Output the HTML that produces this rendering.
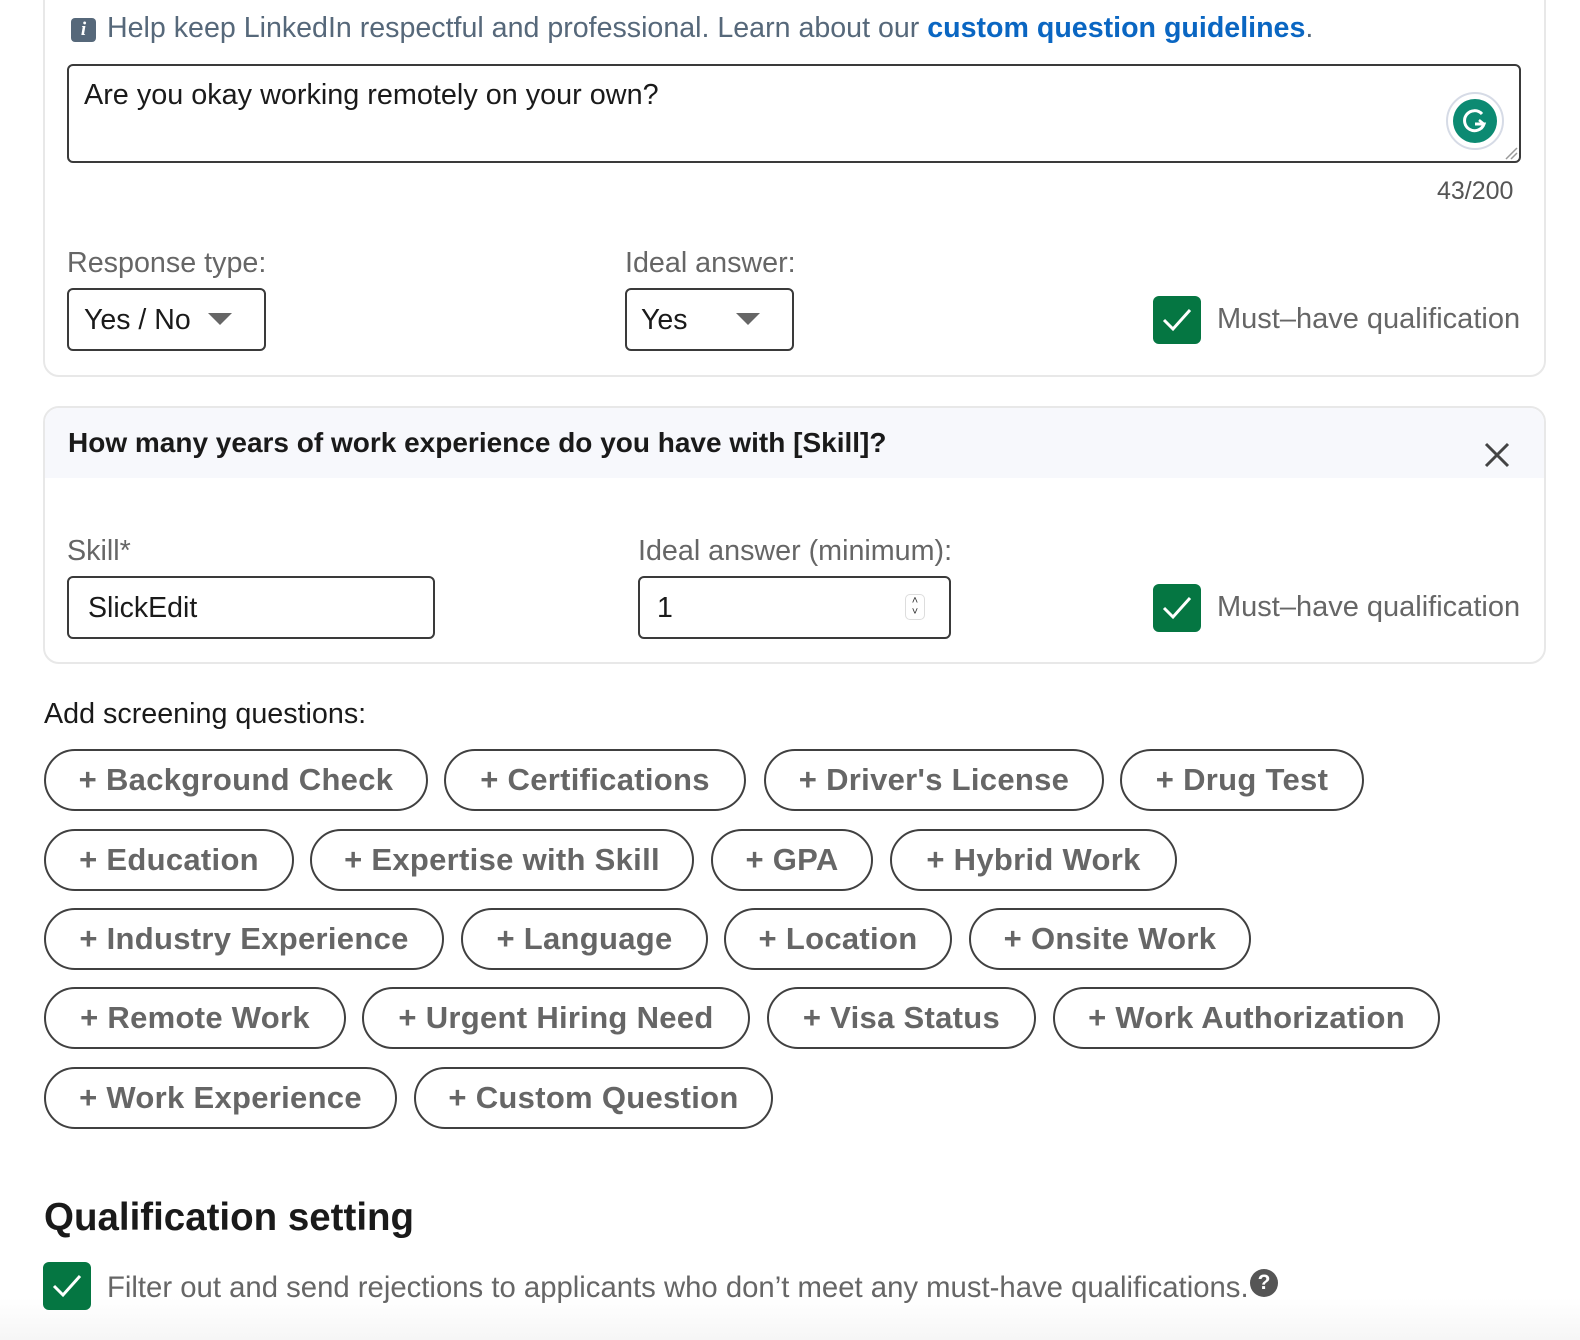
<!DOCTYPE html>
<html><head><meta charset="utf-8">
<style>
*{box-sizing:border-box;margin:0;padding:0}
html,body{width:1580px;height:1340px;overflow:hidden;background:#fff;font-family:"Liberation Sans",sans-serif}
.a{position:absolute;white-space:nowrap}
.card{position:absolute;border:2px solid #e8e8e8;border-radius:16px;background:#fff}
.box{position:absolute;border:2px solid #3a3a3a;border-radius:6px;background:#fff}
.lbl{position:absolute;font-size:28.7px;color:#666;white-space:nowrap}
.cb{position:absolute;width:48px;height:48px;background:#057642;border-radius:6px}
.cb svg{position:absolute;left:8px;top:9px}
.pill{position:absolute;height:62px;border:2px solid #404040;border-radius:31px;display:flex;align-items:center;justify-content:center;font-size:31px;font-weight:bold;color:#666;white-space:nowrap;letter-spacing:0.3px}
.tri{position:absolute;width:0;height:0;border-left:12px solid transparent;border-right:12px solid transparent;border-top:12px solid #666}
</style></head><body>
<div style="position:absolute;left:0;top:1200px;width:1580px;height:140px;background:linear-gradient(#fff 70%,#f6f6f6)"></div>

<div class="card" style="left:43px;top:-20px;width:1503px;height:397px"></div>
<div class="a" style="left:71px;top:18px;width:25px;height:24px;background:#56687a;border-radius:4px;color:#fff;font-weight:bold;font-style:italic;font-size:19px;text-align:center;line-height:24px;font-family:'Liberation Serif',serif">i</div>
<div class="a" style="left:107px;top:12px;font-size:28.6px;color:#56687a">Help keep LinkedIn respectful and professional. Learn about our <b style="color:#0a66c2">custom question guidelines</b>.</div>
<div class="box" style="left:67px;top:64px;width:1454px;height:99px"></div>
<div class="a" style="left:84px;top:79px;font-size:28.8px;color:#1a1a1a">Are you okay working remotely on your own?</div>
<div class="a" style="left:1446px;top:92px;width:58px;height:58px;border-radius:50%;border:2px solid #d6dbe6;background:#fff"></div>
<div class="a" style="left:1453px;top:99px;width:44px;height:44px;border-radius:50%;background:#0c8a72"></div>
<svg class="a" style="left:1453px;top:99px" width="44" height="44" viewBox="0 0 44 44"><path d="M29 15 A10 10 0 1 0 31 25 L22 25" fill="none" stroke="#fff" stroke-width="3"/><path d="M26 21 L31 25 L28 30" fill="none" stroke="#fff" stroke-width="2.5"/></svg>
<svg class="a" style="left:1504px;top:146px" width="14" height="14"><path d="M2 13 L13 2 M7 13 L13 7" stroke="#999" stroke-width="1.5"/></svg>
<div class="a" style="left:1437px;top:177px;font-size:25px;color:#555">43/200</div>
<div class="lbl" style="left:67px;top:247px">Response type:</div>
<div class="box" style="left:67px;top:288px;width:199px;height:63px"></div>
<div class="a" style="left:84px;top:304px;font-size:28.5px;color:#1a1a1a">Yes / No</div>
<div class="tri" style="left:208px;top:313px"></div>
<div class="lbl" style="left:625px;top:247px">Ideal answer:</div>
<div class="box" style="left:625px;top:288px;width:169px;height:63px"></div>
<div class="a" style="left:641px;top:304px;font-size:28.5px;color:#1a1a1a">Yes</div>
<div class="tri" style="left:736px;top:313px"></div>
<div class="cb" style="left:1153px;top:296px"><svg width="32" height="30"><path d="M3 15 L12 24 L29 5" fill="none" stroke="#fff" stroke-width="3"/></svg></div>
<div class="lbl" style="left:1217px;top:303px;font-size:29px">Must–have qualification</div>

<div class="card" style="left:43px;top:406px;width:1503px;height:258px;overflow:hidden"><div style="height:70px;background:#f7f8fc"></div></div>
<div class="a" style="left:68px;top:427px;font-size:28px;font-weight:bold;color:#1a1a1a">How many years of work experience do you have with [Skill]?</div>
<svg class="a" style="left:1484px;top:442px" width="26" height="26"><path d="M2 2 L24 24 M24 2 L2 24" stroke="#444" stroke-width="3"/></svg>
<div class="lbl" style="left:67px;top:535px">Skill*</div>
<div class="box" style="left:67px;top:576px;width:368px;height:63px"></div>
<div class="a" style="left:88px;top:592px;font-size:28.5px;color:#1a1a1a">SlickEdit</div>
<div class="lbl" style="left:638px;top:535px">Ideal answer (minimum):</div>
<div class="box" style="left:638px;top:576px;width:313px;height:63px"></div>
<div class="a" style="left:657px;top:592px;font-size:28.5px;color:#1a1a1a">1</div>
<div class="a" style="left:905px;top:594px;width:20px;height:26px;border:1px solid #ddd;border-radius:5px;font-size:11px;line-height:11px;text-align:center;color:#333;padding-top:1px">˄<br>˅</div>
<div class="cb" style="left:1153px;top:584px"><svg width="32" height="30"><path d="M3 15 L12 24 L29 5" fill="none" stroke="#fff" stroke-width="3"/></svg></div>
<div class="lbl" style="left:1217px;top:591px;font-size:29px">Must–have qualification</div>

<div class="a" style="left:44px;top:698px;font-size:28.7px;color:#1a1a1a">Add screening questions:</div>

<div class="pill" style="left:44px;top:749px;width:384px">+ Background Check</div>
<div class="pill" style="left:444px;top:749px;width:302px">+ Certifications</div>
<div class="pill" style="left:764px;top:749px;width:340px">+ Driver's License</div>
<div class="pill" style="left:1120px;top:749px;width:244px">+ Drug Test</div>

<div class="pill" style="left:44px;top:829px;width:250px">+ Education</div>
<div class="pill" style="left:310px;top:829px;width:384px">+ Expertise with Skill</div>
<div class="pill" style="left:711px;top:829px;width:162px">+ GPA</div>
<div class="pill" style="left:890px;top:829px;width:287px">+ Hybrid Work</div>

<div class="pill" style="left:44px;top:908px;width:400px">+ Industry Experience</div>
<div class="pill" style="left:461px;top:908px;width:247px">+ Language</div>
<div class="pill" style="left:724px;top:908px;width:228px">+ Location</div>
<div class="pill" style="left:969px;top:908px;width:282px">+ Onsite Work</div>

<div class="pill" style="left:44px;top:987px;width:302px">+ Remote Work</div>
<div class="pill" style="left:362px;top:987px;width:388px">+ Urgent Hiring Need</div>
<div class="pill" style="left:767px;top:987px;width:269px">+ Visa Status</div>
<div class="pill" style="left:1053px;top:987px;width:387px">+ Work Authorization</div>

<div class="pill" style="left:44px;top:1067px;width:353px">+ Work Experience</div>
<div class="pill" style="left:414px;top:1067px;width:359px">+ Custom Question</div>

<div class="a" style="left:44px;top:1196px;font-size:38.5px;font-weight:bold;color:#1a1a1a">Qualification setting</div>
<div class="cb" style="left:43px;top:1262px"><svg width="32" height="30"><path d="M3 15 L12 24 L29 5" fill="none" stroke="#fff" stroke-width="3"/></svg></div>
<div class="a" style="left:107px;top:1271px;font-size:29.3px;color:#666">Filter out and send rejections to applicants who don’t meet any must-have qualifications.</div>
<div class="a" style="left:1250px;top:1269px;width:28px;height:28px;border-radius:50%;background:#555;color:#fff;font-weight:bold;font-size:21px;text-align:center;line-height:28px">?</div>
</body></html>
